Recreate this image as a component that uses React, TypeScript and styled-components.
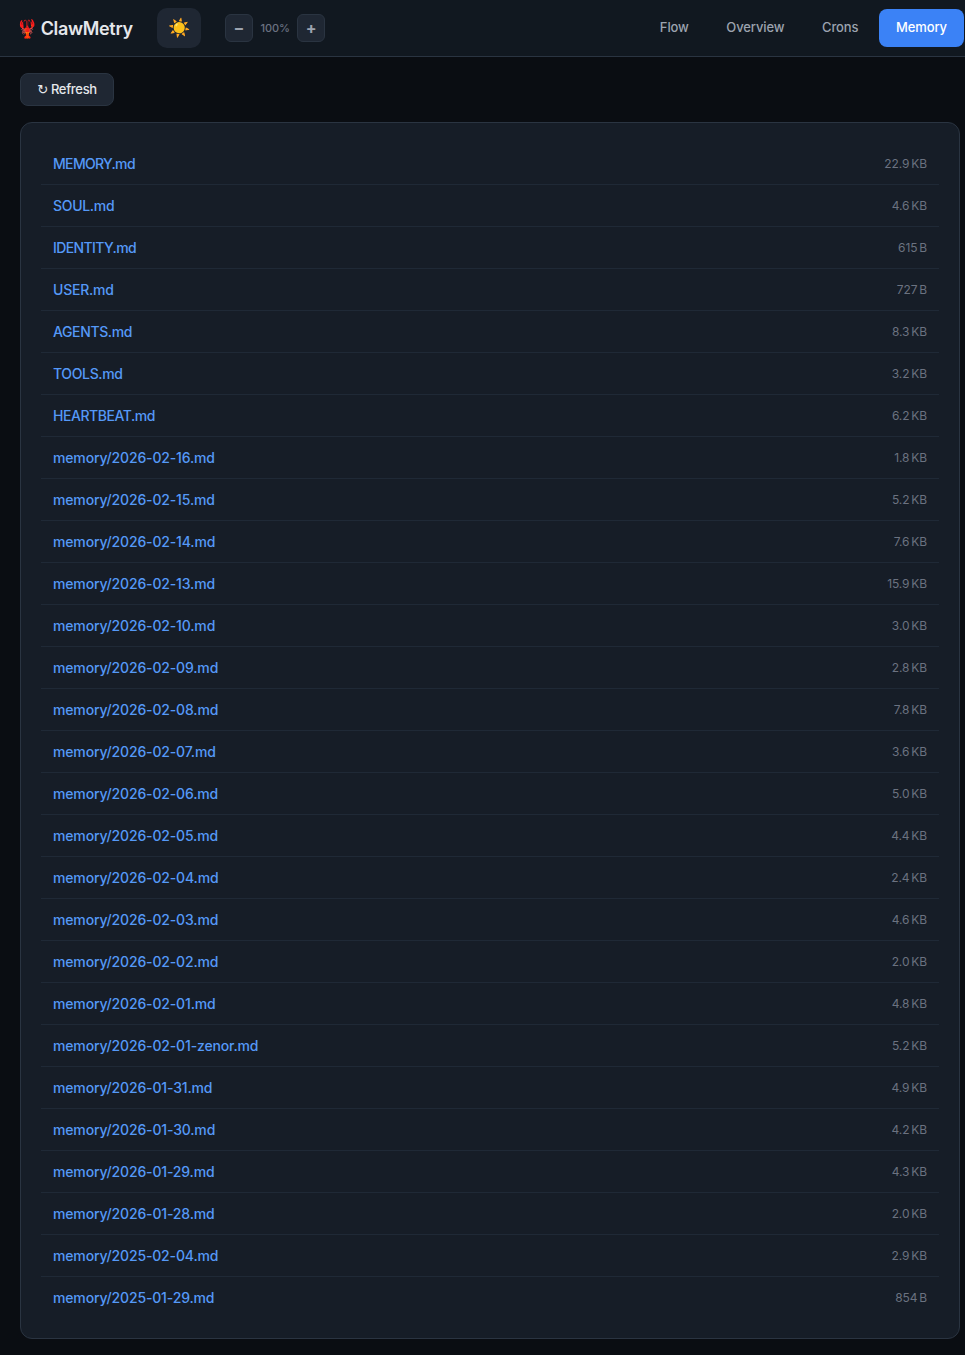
import React from 'react';
import styled, { createGlobalStyle } from 'styled-components';

interface MemoryFile {
  path: string;
  size: string;
  tracking?: number;
}

const files: MemoryFile[] = [
  { path: 'MEMORY.md', size: '22.9 KB', tracking: -0.67 },
  { path: 'SOUL.md', size: '4.6 KB', tracking: -0.3 },
  { path: 'IDENTITY.md', size: '615 B', tracking: -0.6 },
  { path: 'USER.md', size: '727 B', tracking: -0.22 },
  { path: 'AGENTS.md', size: '8.3 KB', tracking: -0.38 },
  { path: 'TOOLS.md', size: '3.2 KB', tracking: -0.36 },
  { path: 'HEARTBEAT.md', size: '6.2 KB', tracking: -0.46 },
  { path: 'memory/2026-02-16.md', size: '1.8 KB' },
  { path: 'memory/2026-02-15.md', size: '5.2 KB' },
  { path: 'memory/2026-02-14.md', size: '7.6 KB' },
  { path: 'memory/2026-02-13.md', size: '15.9 KB' },
  { path: 'memory/2026-02-10.md', size: '3.0 KB' },
  { path: 'memory/2026-02-09.md', size: '2.8 KB' },
  { path: 'memory/2026-02-08.md', size: '7.8 KB' },
  { path: 'memory/2026-02-07.md', size: '3.6 KB' },
  { path: 'memory/2026-02-06.md', size: '5.0 KB' },
  { path: 'memory/2026-02-05.md', size: '4.4 KB' },
  { path: 'memory/2026-02-04.md', size: '2.4 KB' },
  { path: 'memory/2026-02-03.md', size: '4.6 KB' },
  { path: 'memory/2026-02-02.md', size: '2.0 KB' },
  { path: 'memory/2026-02-01.md', size: '4.8 KB' },
  { path: 'memory/2026-02-01-zenor.md', size: '5.2 KB' },
  { path: 'memory/2026-01-31.md', size: '4.9 KB' },
  { path: 'memory/2026-01-30.md', size: '4.2 KB' },
  { path: 'memory/2026-01-29.md', size: '4.3 KB' },
  { path: 'memory/2026-01-28.md', size: '2.0 KB' },
  { path: 'memory/2025-02-04.md', size: '2.9 KB' },
  { path: 'memory/2025-01-29.md', size: '854 B' },
];

const GlobalStyle = createGlobalStyle`
  body {
    margin: 0;
    background: #0a0d12;
    font-family: Inter, "Liberation Sans", sans-serif;
  }
`;

const Topbar = styled.header`
  display: flex;
  align-items: center;
  height: 56px;
  padding: 0 1px 0 16px;
  background: #111820;
  border-bottom: 1px solid #2a3441;
`;

const Brand = styled.div`
  display: flex;
  align-items: center;
  gap: 3px;
  width: 141px;
  font-size: 18px;
  font-weight: 600;
  letter-spacing: -0.33px;
  color: #e5e7eb;
`;

const ThemeToggle = styled.button`
  display: flex;
  align-items: center;
  justify-content: center;
  width: 44px;
  height: 40px;
  padding: 0;
  border: none;
  border-radius: 10px;
  background: #1f2733;
  font-size: 18px;
`;

const ZoomControls = styled.div`
  display: flex;
  align-items: center;
  gap: 7.5px;
  margin-left: 24px;
`;

const ZoomButton = styled.button`
  width: 28px;
  height: 28px;
  padding: 0;
  border: 1px solid #2a3441;
  border-radius: 6px;
  background: #1f2733;
  color: #9ca3af;
  font-family: inherit;
  font-size: 16px;
  font-weight: 700;
  line-height: 1;
`;

const ZoomValue = styled.span`
  font-size: 11px;
  font-weight: 500;
  letter-spacing: -0.12px;
  color: #6b7280;
`;

const Nav = styled.nav`
  display: flex;
  align-items: center;
  gap: 3.5px;
  margin-left: auto;
`;

const NavItem = styled.a<{ $active?: boolean }>`
  padding: 9px 17px 11px;
  border-radius: 8px;
  background: ${(p) => (p.$active ? '#3b82f6' : 'transparent')};
  color: ${(p) => (p.$active ? '#ffffff' : '#9ca3af')};
  font-size: 13px;
  font-weight: 500;
  letter-spacing: -0.1px;
  line-height: 18px;
`;

const Content = styled.main`
  display: flex;
  flex-direction: column;
  align-items: flex-start;
  gap: 16px;
  padding: 16px 5px 16px 20px;
`;

const RefreshButton = styled.button`
  height: 33px;
  width: 94px;
  padding: 0 0 2px;
  border: 1px solid #2a3441;
  border-radius: 8px;
  background: #1f2733;
  color: #e5e7eb;
  font-family: inherit;
  font-size: 13px;
  font-weight: 500;
  letter-spacing: -0.3px;
`;

const RefreshGlyph = styled.span`
  font-family: "DejaVu Sans", sans-serif;
  font-size: 13px;
`;

const Card = styled.section`
  align-self: stretch;
  padding: 20px;
  background: #161d27;
  border: 1px solid #2a3441;
  border-radius: 12px;
`;

const Row = styled.div`
  display: flex;
  align-items: center;
  justify-content: space-between;
  height: 41px;
  padding: 0 12px;
  border-bottom: 1px solid #1f2936;

  &:last-child {
    border-bottom: none;
  }
`;

const FileLink = styled.a<{ $tracking?: number }>`
  color: #5599f7;
  font-size: 14px;
  font-weight: 500;
  letter-spacing: ${(p) => p.$tracking ?? -0.15}px;
`;

const FileSize = styled.span`
  color: #6b7280;
  font-size: 12px;
  letter-spacing: -0.1px;
  word-spacing: -1.4px;
`;

const App: React.FC = () => {
  return (
    <>
      <GlobalStyle />
      <Topbar>
        <Brand>
          <span>🦞</span>
          ClawMetry
        </Brand>
        <ThemeToggle>☀️</ThemeToggle>
        <ZoomControls>
          <ZoomButton>−</ZoomButton>
          <ZoomValue>100%</ZoomValue>
          <ZoomButton>+</ZoomButton>
        </ZoomControls>
        <Nav>
          <NavItem>Flow</NavItem>
          <NavItem>Overview</NavItem>
          <NavItem>Crons</NavItem>
          <NavItem $active>Memory</NavItem>
        </Nav>
      </Topbar>
      <Content>
        <RefreshButton>
          <RefreshGlyph>↻</RefreshGlyph> Refresh
        </RefreshButton>
        <Card>
          {files.map((file) => (
            <Row key={file.path}>
              <FileLink $tracking={file.tracking}>{file.path}</FileLink>
              <FileSize>{file.size}</FileSize>
            </Row>
          ))}
        </Card>
      </Content>
    </>
  );
};

export default App;
